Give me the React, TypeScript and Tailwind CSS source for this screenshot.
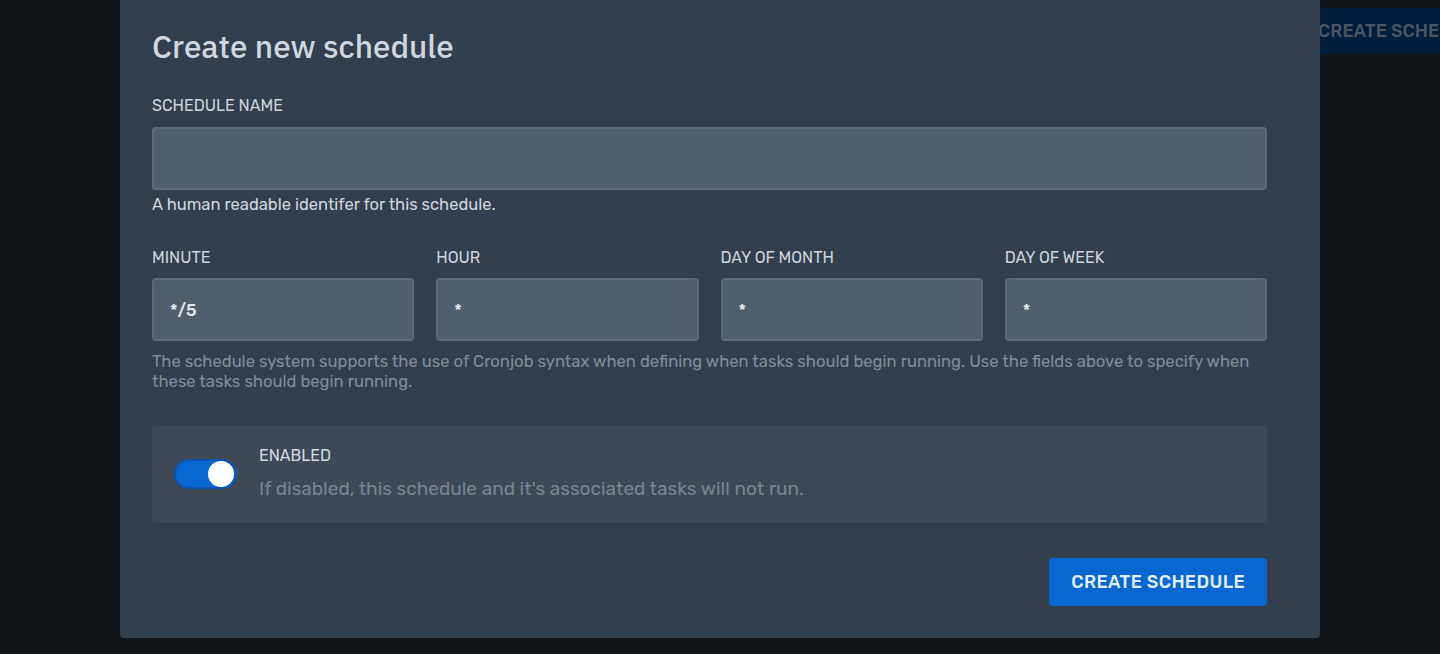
import { useState } from "react";

const heading = { fontFamily: '"IBM Plex Sans", "Noto Sans", "Open Sans", sans-serif' };
const body = { fontFamily: 'Rubik, "Noto Sans", "Open Sans", sans-serif' };

const cronFields = [
  { label: "MINUTE", value: "*/5" },
  { label: "HOUR", value: "*" },
  { label: "DAY OF MONTH", value: "*" },
  { label: "DAY OF WEEK", value: "*" },
];

export default function App() {
  const [name, setName] = useState("");
  const [enabled, setEnabled] = useState(true);
  const [cron, setCron] = useState(cronFields.map((f) => f.value));

  return (
    <div className="relative h-[654px] w-full overflow-hidden bg-[#111418]" style={body}>
      {/* page behind the overlay */}
      <div className="absolute right-0 top-[8px] flex h-[46px] w-[130px] items-center overflow-hidden bg-[#001d3c] pl-[8px]">
        <span className="whitespace-nowrap text-[18px] font-medium text-[#4b5563]">CREATE SCHEDULE</span>
      </div>

      <div className="relative mx-[120px] w-[1200px] rounded-b-[4px] bg-[#333f4d] pb-[32px] pl-[32px] pr-[53px] pt-[27px]">
        <h2 className="text-[31.5px] font-medium leading-[40px] text-[#cfd6de]" style={heading}>
          Create new schedule
        </h2>

        <div className="mt-[29px]">
          <label className="block text-[16px] leading-[20px] text-[#cdd4db]">SCHEDULE NAME</label>
          <input
            value={name}
            onChange={(e) => setName(e.target.value)}
            className="mt-[11px] block h-[63px] w-full rounded-[4px] border-2 border-[#5d6a77] bg-[#515f6c] px-[16px] text-[17px] text-[#e5e9ed] outline-none"
          />
          <p className="mt-[5px] text-[16.5px] leading-[20px] text-[#d0d6dd]">
            A human readable identifer for this schedule.
          </p>
        </div>

        <div className="mt-[33px] grid grid-cols-4 gap-x-[22px]">
          {cronFields.map((f, i) => (
            <div key={f.label}>
              <label className="block text-[16px] leading-[20px] text-[#cdd4db]">{f.label}</label>
              <input
                value={cron[i]}
                onChange={(e) => setCron(cron.map((c, j) => (j === i ? e.target.value : c)))}
                className="mt-[10px] block h-[63px] w-full rounded-[4px] border-2 border-[#5d6a77] bg-[#515f6c] px-[16px] text-[17px] font-medium text-[#e5e9ed] outline-none"
              />
            </div>
          ))}
        </div>
        <p className="mt-[10px] text-[16.6px] leading-[20px] text-[#818d99]">
          The schedule system supports the use of Cronjob syntax when defining when tasks should begin running. Use the fields above to specify when these tasks should begin running.
        </p>

        <div className="mt-[35px] flex items-center gap-[22px] rounded-[4px] bg-[#3e4955] pb-[22px] pl-[22px] pr-[22px] pt-[20px]">
          <button
            onClick={() => setEnabled(!enabled)}
            className={`flex h-[30px] w-[63px] shrink-0 items-center rounded-full border-2 px-[1px] ${
              enabled ? "justify-end border-[#0b55b5] bg-[#0967d2]" : "justify-start border-[#5d6a77] bg-[#515f6c]"
            }`}
          >
            <span className="h-[26px] w-[26px] rounded-full bg-white" />
          </button>
          <div>
            <p className="text-[16px] leading-[20px] text-[#d4dae0]">ENABLED</p>
            <p className="mt-[11px] text-[19px] leading-[24px] text-[#7a8591]">
              If disabled, this schedule and it's associated tasks will not run.
            </p>
          </div>
        </div>

        <div className="mt-[35px] flex justify-end">
          <button className="h-[48px] rounded-[4px] bg-[#0967d2] px-[22px] text-[18px] font-medium tracking-[0.02em] text-[#e3eefb]">
            CREATE SCHEDULE
          </button>
        </div>
      </div>
    </div>
  );
}
